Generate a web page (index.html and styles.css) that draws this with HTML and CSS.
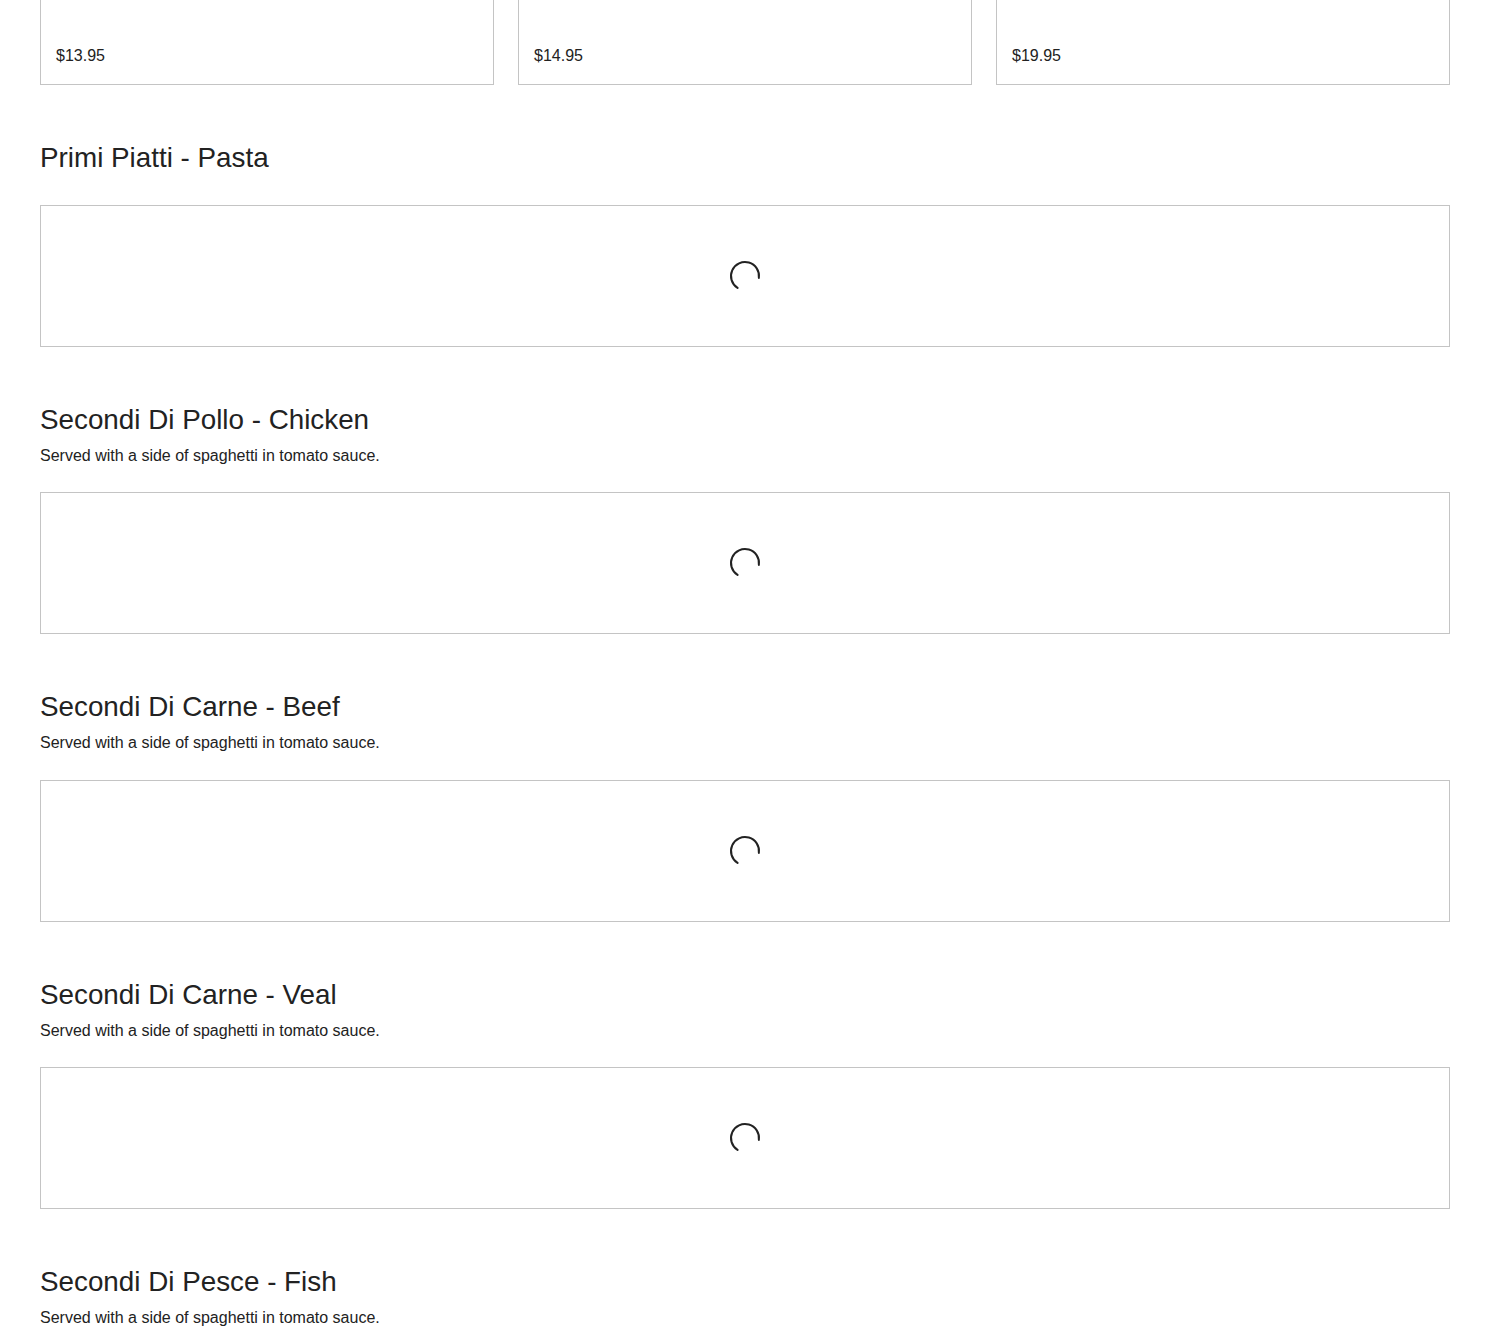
FILE: index.html
```html
<!DOCTYPE html>
<html lang="en">
<head>
<meta charset="utf-8">
<title>Menu</title>
<link rel="stylesheet" href="styles.css">
</head>
<body>
<main class="menu">
  <div class="item-grid">
    <div class="item-card"><span class="price">$13.95</span></div>
    <div class="item-card"><span class="price">$14.95</span></div>
    <div class="item-card"><span class="price">$19.95</span></div>
  </div>

  <section class="category">
    <header class="category-head">
      <h2 class="category-title">Primi Piatti - Pasta</h2>
    </header>
    <div class="loading-box">
      <svg class="spinner" viewBox="0 0 32 32" width="32" height="32" aria-hidden="true"><path d="M8.58 27.87 A14 14 0 1 1 29.86 17.95"/></svg>
    </div>
  </section>

  <section class="category">
    <header class="category-head">
      <h2 class="category-title">Secondi Di Pollo - Chicken</h2>
      <p class="category-note">Served with a side of spaghetti in tomato sauce.</p>
    </header>
    <div class="loading-box">
      <svg class="spinner" viewBox="0 0 32 32" width="32" height="32" aria-hidden="true"><path d="M8.58 27.87 A14 14 0 1 1 29.86 17.95"/></svg>
    </div>
  </section>

  <section class="category">
    <header class="category-head">
      <h2 class="category-title">Secondi Di Carne - Beef</h2>
      <p class="category-note">Served with a side of spaghetti in tomato sauce.</p>
    </header>
    <div class="loading-box">
      <svg class="spinner" viewBox="0 0 32 32" width="32" height="32" aria-hidden="true"><path d="M8.58 27.87 A14 14 0 1 1 29.86 17.95"/></svg>
    </div>
  </section>

  <section class="category">
    <header class="category-head">
      <h2 class="category-title">Secondi Di Carne - Veal</h2>
      <p class="category-note">Served with a side of spaghetti in tomato sauce.</p>
    </header>
    <div class="loading-box">
      <svg class="spinner" viewBox="0 0 32 32" width="32" height="32" aria-hidden="true"><path d="M8.58 27.87 A14 14 0 1 1 29.86 17.95"/></svg>
    </div>
  </section>

  <section class="category">
    <header class="category-head">
      <h2 class="category-title">Secondi Di Pesce - Fish</h2>
      <p class="category-note">Served with a side of spaghetti in tomato sauce.</p>
    </header>
  </section>
</main>
</body>
</html>
```

FILE: styles.css
```css
html, body {
  margin: 0;
  padding: 0;
  background: #fff;
}

body {
  font-family: "Liberation Sans", Arial, Helvetica, sans-serif;
  color: #222;
}

.menu {
  padding: 0 40px;
}

/* row of dish cards, scrolled so their tops are out of view */
.item-grid {
  display: grid;
  grid-template-columns: repeat(3, 1fr);
  gap: 24px;
}

.item-card {
  height: 85px;
  box-sizing: border-box;
  border: 1px solid #c4c4c4;
  border-top: none;
  padding: 0 15px 16px;
  display: flex;
  align-items: flex-end;
}

.price {
  font-size: 16px;
  line-height: 24px;
}

.category {
  padding-top: 56px;
}

.category-head {
  padding-bottom: 30px;
}

.category-head:has(.category-note) {
  padding-bottom: 24.3px;
}

.category-title {
  margin: 0;
  font-size: 27.8px;
  font-weight: 400;
  line-height: 34px;
}

.category-note {
  margin: 7px 0 0;
  font-size: 16px;
  line-height: 24px;
}

.loading-box {
  height: 142px;
  box-sizing: border-box;
  border: 1px solid #c4c4c4;
  display: flex;
  align-items: center;
  justify-content: center;
}

.spinner {
  display: block;
}

.spinner path {
  fill: none;
  stroke: #222;
  stroke-width: 2;
  stroke-linecap: round;
}
```
